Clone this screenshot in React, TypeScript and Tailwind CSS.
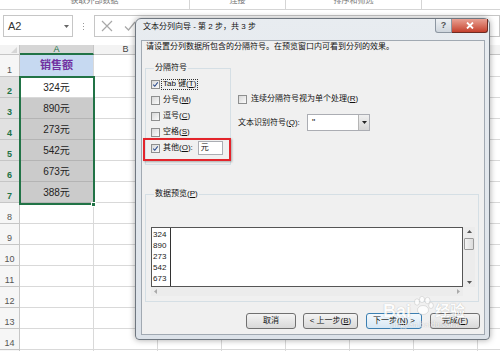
import React from "react";

const colW = [74, 64, 64, 64, 64, 64, 64, 64];
const letters = ["A", "B", "", "", "", "", "", ""];
const data = ["324元", "890元", "273元", "542元", "673元", "388元"];

function Check({ checked }: { checked?: boolean }) {
  return (
    <span className="flex h-[9px] w-[9px] shrink-0 items-center justify-center border border-[#8e8f8f] bg-linear-to-br from-[#d8d8d8] to-[#fbfbfb]">
      {checked && (
        <svg viewBox="0 0 9 9" className="h-[9px] w-[9px]">
          <path d="M1.6 4.6 L3.6 6.8 L7.4 1.8" stroke="#2a4a8c" strokeWidth="1.3" fill="none" />
        </svg>
      )}
    </span>
  );
}

function Btn({ children, w, focus }: { children: React.ReactNode; w: string; focus?: boolean }) {
  return (
    <div
      className={`flex h-[16px] items-center justify-center rounded-[3px] border text-[8px] leading-none text-[#111] ${w} ${
        focus
          ? "border-[#3c7fb1] bg-linear-to-b from-[#f4f9fd] to-[#d6e7f4]"
          : "border-[#707070] bg-linear-to-b from-[#f4f4f4] to-[#d9d9d9]"
      }`}
    >
      {children}
    </div>
  );
}

function Grid() {
  const rows = Array.from({ length: 15 }, (_, i) => i + 1);
  return (
    <div className="relative">
      {/* column headers */}
      <div className="flex h-[10px]">
        <div className="relative w-[20px] shrink-0 border-r border-b border-[#c6c6c6] bg-[#f3f3f3]">
          <svg viewBox="0 0 6 6" className="absolute right-[2px] bottom-[1px] h-[6px] w-[6px]">
            <path d="M6 0 L6 6 L0 6 Z" fill="#d6d6d6" />
          </svg>
        </div>
        {colW.map((w, i) => (
          <div
            key={i}
            style={{ width: w }}
            className={`flex shrink-0 items-center justify-center border-r border-[#c6c6c6] text-[9px] leading-none ${
              i === 0
                ? "border-b-2 border-b-[#217346] bg-[#d6d6d6] text-[#217346]"
                : "border-b border-b-[#c6c6c6] bg-[#f3f3f3] text-[#444]"
            }`}
          >
            {letters[i]}
          </div>
        ))}
      </div>
      {rows.map((r) => {
        const sel = r >= 2 && r <= 7;
        return (
          <div key={r} className={`flex ${r === 1 ? "h-[22px]" : "h-[21px]"}`}>
            <div
              className={`flex w-[20px] shrink-0 items-end justify-center border-r border-b border-[#c6c6c6] pb-[1px] text-[9px] leading-[10px] ${
                sel ? "bg-[#e1e1e1] font-bold text-[#217346]" : "bg-[#f6f6f6] text-[#555]"
              }`}
            >
              {r}
            </div>
            {colW.map((w, i) => {
              let cls = "border-r border-b border-[#d9d9d9] bg-white";
              let content: React.ReactNode = null;
              if (i === 0 && r === 1) {
                cls = "border-r border-b border-[#d9d9d9] bg-[#c6d9f1]";
                content = <span className="text-[11px] font-bold text-[#7030a0]">销售额</span>;
              } else if (i === 0 && sel) {
                cls = r === 2 ? "border-r border-b border-[#d9d9d9] bg-white" : "border-r border-b border-[#b4b4b4] bg-[#cbcbcb]";
                content = <span className="text-[10px] text-[#222]">{data[r - 2]}</span>;
              }
              return (
                <div key={i} style={{ width: w }} className={`flex shrink-0 items-center justify-center ${cls}`}>
                  {content}
                </div>
              );
            })}
          </div>
        );
      })}
      {/* selection outline */}
      <div className="absolute left-[19px] top-[31px] h-[129px] w-[76px] border-2 border-[#217346]" />
      <div className="absolute left-[91px] top-[157px] h-[5px] w-[5px] border border-white bg-[#217346]" />
    </div>
  );
}

export default function App() {
  return (
    <div className="relative h-[351px] w-[500px] overflow-hidden bg-white font-['Liberation_Sans','Noto_Sans_CJK_SC',sans-serif] text-black">
      {/* ribbon bottom strip */}
      <div className="flex h-[10px] overflow-hidden border-b border-[#d5d5d5] bg-white text-[8px] text-[#777]">
        <div className="flex w-[190px] shrink-0 items-start justify-center border-r border-[#d5d5d5] leading-[2px]">获取外部数据</div>
        <div className="flex w-[96px] shrink-0 items-start justify-center border-r border-[#d5d5d5] leading-[2px]">连接</div>
        <div className="flex w-[136px] shrink-0 items-start justify-center border-r border-[#d5d5d5] leading-[2px]">排序和筛选</div>
        <div className="flex-1" />
      </div>

      {/* formula bar */}
      <div className="flex h-[35px] items-start pt-[5px]">
        <div className="ml-[3px] flex h-[22px] w-[70px] items-center justify-between border border-[#c6c6c6] pl-[4px] pr-[3px]">
          <span className="text-[11px] text-[#333]">A2</span>
          <svg viewBox="0 0 5 3" className="h-[3px] w-[5px]">
            <path d="M0 0 L5 0 L2.5 3 Z" fill="#666" />
          </svg>
        </div>
        <div className="flex h-[22px] w-[21px] flex-col items-center justify-center gap-[2px]">
          <span className="h-[1px] w-[1px] bg-[#999]" />
          <span className="h-[1px] w-[1px] bg-[#999]" />
          <span className="h-[1px] w-[1px] bg-[#999]" />
        </div>
        <div className="flex h-[22px] flex-1 items-center gap-[11px] border border-[#c6c6c6] pl-[6px]">
          <svg viewBox="0 0 12 12" className="h-[12px] w-[12px]">
            <path d="M1 1 L11 11 M11 1 L1 11" stroke="#a8a8a8" strokeWidth="1.2" />
          </svg>
          <svg viewBox="0 0 12 12" className="h-[12px] w-[12px]">
            <path d="M1 6.5 L4.5 10 L11 2" stroke="#a8a8a8" strokeWidth="1.2" fill="none" />
          </svg>
        </div>
      </div>

      <Grid />

      {/* dialog window */}
      <div className="absolute left-[135px] top-[18px] flex h-[322px] w-[355px] flex-col rounded-t-[6px] rounded-b-[4px] border border-[#6f7780] bg-linear-to-b from-[#e8ecf0] to-[#dce2e9] shadow-[0_0_6px_rgba(0,0,0,0.35)]">
        {/* title bar */}
        <div className="flex h-[21px] shrink-0 items-start justify-between">
          <span className="pl-[7px] pt-[3px] text-[8px] leading-[10px] text-[#111]">文本分列向导 - 第 2 步，共 3 步</span>
          <div className="mr-[1px] flex">
            <div className="flex h-[14px] w-[17px] items-center justify-center rounded-bl-[3px] border border-t-0 border-[#8c96a1] bg-linear-to-b from-[#eef1f4] to-[#cfd6dd] text-[9px] font-bold leading-none text-[#555]">
              ?
            </div>
            <div className="flex h-[14px] w-[36px] items-center justify-center rounded-br-[3px] border border-t-0 border-l-0 border-[#6e2b22] bg-linear-to-b from-[#e8a093] to-[#c43f2c]">
              <svg viewBox="0 0 8 7" className="h-[7px] w-[8px]">
                <path d="M1 0.5 L7 6.5 M7 0.5 L1 6.5" stroke="white" strokeWidth="1.8" />
              </svg>
            </div>
          </div>
        </div>

        {/* content */}
        <div className="relative ml-[5px] flex h-[295px] w-[344px] flex-col border border-[#a1a9b2] bg-[#f0f0f0] text-[8px] text-[#111]">
          <div className="pl-[4px] pt-[1px] leading-[10px]">请设置分列数据所包含的分隔符号。在预览窗口内可看到分列的效果。</div>

          <div className="mt-[11px] flex">
            <fieldset className="ml-[3px] h-[102px] w-[86px] border border-[#d5dfe5] pl-[5px] pt-[3px]">
              <legend className="ml-[3px] px-[1px] leading-[10px]">分隔符号</legend>
              <div className="flex h-[16px] items-center gap-[1px]">
                <Check checked />
                <span className="flex h-[11px] items-center border border-dotted border-[#333] px-[1px] leading-[10px]">
                  Tab 键(<u>T</u>)
                </span>
              </div>
              <div className="flex h-[16px] items-center gap-[3px]">
                <Check />
                <span className="leading-[10px]">分号(<u>M</u>)</span>
              </div>
              <div className="flex h-[16px] items-center gap-[3px]">
                <Check />
                <span className="leading-[10px]">逗号(<u>C</u>)</span>
              </div>
              <div className="flex h-[16px] items-center gap-[3px]">
                <Check />
                <span className="leading-[10px]">空格(<u>S</u>)</span>
              </div>
              <div className="flex h-[16px] items-center gap-[3px]">
                <Check checked />
                <span className="leading-[10px]">其他(<u>O</u>):</span>
                <div className="ml-[2px] flex h-[14px] w-[25px] items-center border border-[#abadb3] bg-white pl-[2px] leading-none">元</div>
              </div>
            </fieldset>

            <div className="ml-[7px] flex flex-col">
              <div className="mt-[30px] flex h-[12px] items-center gap-[4px]">
                <Check />
                <span className="leading-[10px]">连续分隔符号视为单个处理(<u>R</u>)</span>
              </div>
              <div className="mt-[9px] flex h-[17px] items-center">
                <span className="w-[69px] leading-[10px]">文本识别符号(<u>Q</u>):</span>
                <div className="flex h-[17px] w-[63px] items-center border border-[#abadb3] bg-white">
                  <span className="flex-1 pl-[4px] text-[9px] leading-none">"</span>
                  <div className="flex h-full w-[11px] items-center justify-center border-l border-[#b5b5b5] bg-linear-to-b from-[#f0f0f0] to-[#d6d6d6]">
                    <svg viewBox="0 0 5 3" className="h-[3px] w-[5px]">
                      <path d="M0 0 L5 0 L2.5 3 Z" fill="#222" />
                    </svg>
                  </div>
                </div>
              </div>
            </div>
          </div>

          <fieldset className="ml-[3px] mt-[24px] h-[113px] w-[334px] border border-[#d5dfe5] pl-[5px]">
            <legend className="ml-[3px] px-[1px] leading-[10px]">数据预览(<u>P</u>)</legend>
            <div className="mt-[28px] flex h-[60px]">
              <div className="flex h-[60px] w-[312px] border border-[#555] bg-white">
                <div className="flex w-[19px] flex-col border-r border-[#333] pl-[1px] pt-[1px] font-['Liberation_Sans',sans-serif] text-[8px] leading-[11px] text-[#222]">
                  <span>324</span>
                  <span>890</span>
                  <span>273</span>
                  <span>542</span>
                  <span>673</span>
                </div>
              </div>
              <div className="flex w-[12px] flex-col items-center bg-[#ececec]">
                <svg viewBox="0 0 5 3" className="mt-[3px] h-[3px] w-[5px]">
                  <path d="M0 3 L5 3 L2.5 0 Z" fill="#555" />
                </svg>
                <div className="mt-[5px] h-[12px] w-[10px] rounded-[1px] border border-[#9a9a9a] bg-linear-to-r from-[#f4f4f4] to-[#dcdcdc]" />
                <div className="flex-1" />
                <svg viewBox="0 0 5 3" className="mb-[3px] h-[3px] w-[5px]">
                  <path d="M0 0 L5 0 L2.5 3 Z" fill="#555" />
                </svg>
              </div>
            </div>
            <div className="flex h-[9px] w-[312px] items-center justify-between bg-[#ececec] px-[3px]">
              <svg viewBox="0 0 3 5" className="h-[5px] w-[3px]">
                <path d="M3 0 L3 5 L0 2.5 Z" fill="#aaa" />
              </svg>
              <svg viewBox="0 0 3 5" className="h-[5px] w-[3px]">
                <path d="M0 0 L0 5 L3 2.5 Z" fill="#aaa" />
              </svg>
            </div>
          </fieldset>

          <div className="mt-[11px] flex justify-end pr-[4px]">
            <Btn w="w-[50px]">取消</Btn>
            <div className="ml-[7px]">
              <Btn w="w-[55px]">
                &lt; 上一步(<u>B</u>)
              </Btn>
            </div>
            <div className="ml-[8px]">
              <Btn w="w-[56px]" focus>
                下一步(<u>N</u>) &gt;
              </Btn>
            </div>
            <div className="ml-[8px]">
              <Btn w="w-[50px]">
                完成(<u>F</u>)
              </Btn>
            </div>
          </div>

          {/* red annotation */}
          <div className="absolute left-[1px] top-[97px] h-[23px] w-[88px] border-2 border-[#e3242b] shadow-[1px_1px_2px_rgba(0,0,0,0.3)]" />
        </div>
      </div>

      {/* watermark */}
      <div className="pointer-events-none absolute left-[372px] top-[296px] flex w-[104px] flex-col items-center text-white opacity-80 [text-shadow:0_0_1px_rgba(0,0,0,0.35)]">
        <div className="flex items-end gap-[1px]">
          <span className="font-['Liberation_Sans',sans-serif] text-[18px] font-bold leading-[18px]">Bai</span>
          <svg viewBox="0 0 22 20" className="mb-[4px] h-[20px] w-[22px]">
            <g fill="white" stroke="rgba(0,0,0,0.25)" strokeWidth="0.5">
              <ellipse cx="5" cy="6" rx="2.5" ry="3.2" />
              <ellipse cx="10" cy="3.5" rx="2.5" ry="3.2" />
              <ellipse cx="15.5" cy="4.5" rx="2.5" ry="3.2" />
              <ellipse cx="19" cy="9.5" rx="2.3" ry="3" />
              <ellipse cx="11" cy="14" rx="5.5" ry="4.5" />
            </g>
          </svg>
          <span className="text-[15px] font-bold leading-[18px]">经验</span>
        </div>
        <span className="font-['Liberation_Serif',serif] text-[9px] leading-[9px]">jingyan.baidu.com</span>
      </div>
    </div>
  );
}
